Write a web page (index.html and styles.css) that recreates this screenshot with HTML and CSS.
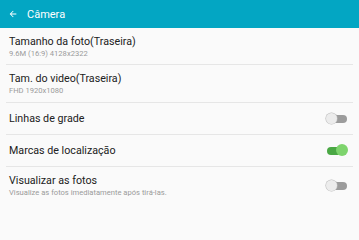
FILE: index.html
```html
<!DOCTYPE html>
<html lang="pt">
<head>
<meta charset="utf-8">
<link rel="stylesheet" href="styles.css">
</head>
<body>
<header class="appbar">
  <svg class="back" viewBox="0 0 24 24" width="10" height="10"><path d="M20 11H7.83l5.59-5.59L12 4l-8 8 8 8 1.41-1.41L7.83 13H20v-2z" fill="#fff"/></svg>
  <span class="title">Câmera</span>
</header>
<main class="list">
  <div class="row two">
    <div class="text">
      <div class="primary">Tamanho da foto(Traseira)</div>
      <div class="secondary">9.6M (16:9) 4128x2322</div>
    </div>
  </div>
  <div class="row two tall">
    <div class="text">
      <div class="primary">Tam. do video(Traseira)</div>
      <div class="secondary">FHD 1920x1080</div>
    </div>
  </div>
  <div class="row one">
    <div class="text"><div class="primary">Linhas de grade</div></div>
    <span class="switch"><span class="track"></span><span class="thumb"></span></span>
  </div>
  <div class="row one">
    <div class="text"><div class="primary">Marcas de localização</div></div>
    <span class="switch on"><span class="track"></span><span class="thumb"></span></span>
  </div>
  <div class="row two last">
    <div class="text">
      <div class="primary">Visualizar as fotos</div>
      <div class="secondary">Visualize as fotos imediatamente após tirá-las.</div>
    </div>
    <span class="switch"><span class="track"></span><span class="thumb"></span></span>
  </div>
</main>
</body>
</html>
```
FILE: styles.css
```css
html, body {
  margin: 0;
  padding: 0;
  background: #fafafa;
  font-family: Roboto, "Noto Sans", sans-serif;
  width: 359px;
  height: 202px;
  overflow: hidden;
}
.appbar {
  height: 28px;
  background: #03a6c3;
  display: flex;
  align-items: center;
  padding-left: 8px;
  box-sizing: border-box;
}
.back {
  display: block;
}
.appbar .title {
  color: #fff;
  font-size: 11px;
  margin-left: 9px;
}
.list {
  display: flex;
  flex-direction: column;
}
.row {
  display: flex;
  align-items: center;
  justify-content: space-between;
  margin: 0 6px;
  padding: 0 3px;
  border-bottom: 1px solid #e6e6e6;
  box-sizing: border-box;
}
.row.two { height: 37px; }
.row.two.tall { height: 38px; }
.row.one { height: 32px; }
.row.last { border-bottom: none; }
.primary {
  font-size: 10.7px;
  color: #212121;
  line-height: 13px;
}
.secondary {
  font-size: 7.6px;
  color: #9a9a9a;
  line-height: 9px;
  margin-top: 1px;
}
.switch {
  position: relative;
  width: 22px;
  height: 12px;
  margin-right: 2px;
  flex-shrink: 0;
}
.switch .track {
  position: absolute;
  left: 3px;
  right: 1px;
  top: 2px;
  height: 8px;
  border-radius: 4px;
  background: #9c9c9c;
}
.switch .thumb {
  position: absolute;
  left: 0;
  top: 0;
  width: 11px;
  height: 11px;
  border-radius: 50%;
  background: #ececec;
  box-shadow: 0 0 0 0.6px #bdbdbd;
}
.switch.on .track {
  left: 1px;
  right: 3px;
  background: #4aa844;
}
.switch.on .thumb {
  left: auto;
  right: 0;
  top: -0.5px;
  width: 12px;
  height: 12px;
  background: #7ed46d;
  box-shadow: none;
}
```
